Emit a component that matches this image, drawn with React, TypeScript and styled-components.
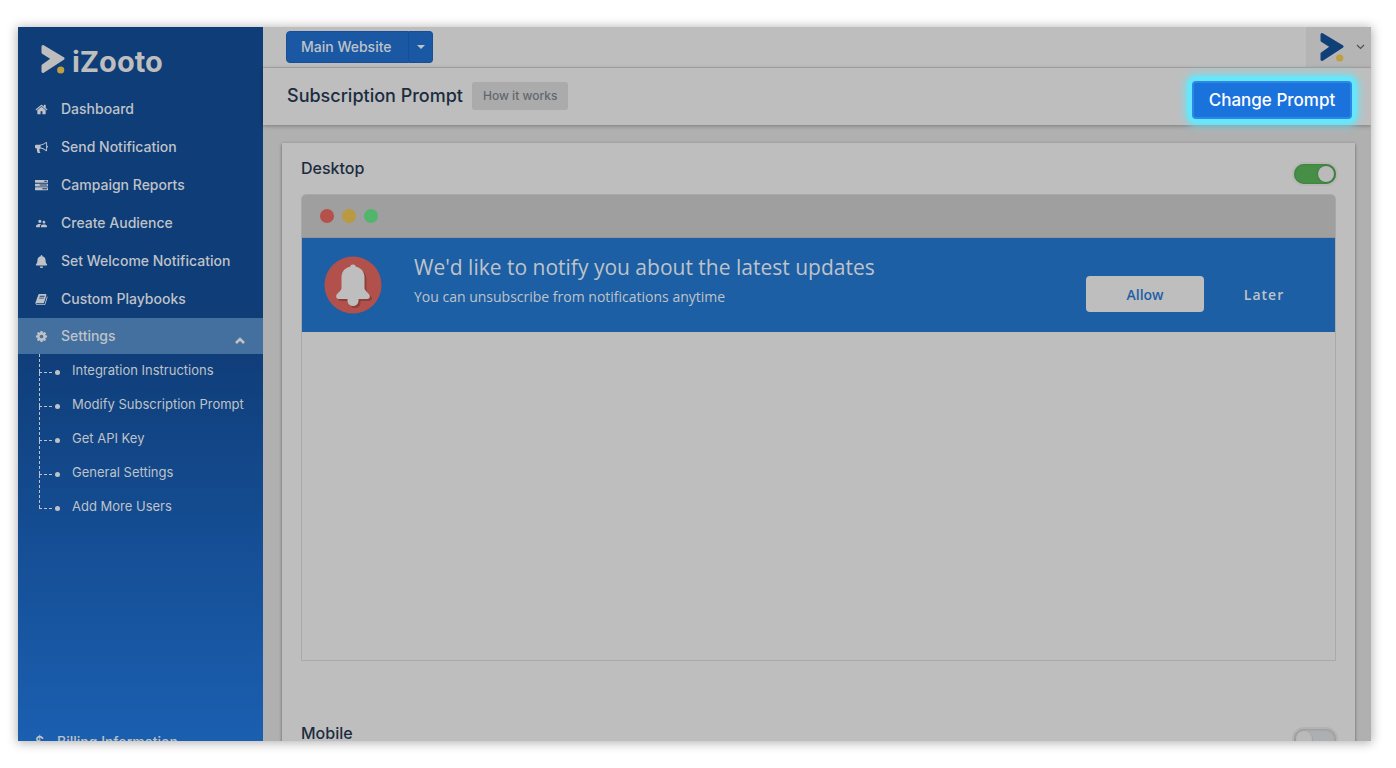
import React from 'react';
import styled, { createGlobalStyle, css } from 'styled-components';
import { FaBell } from 'react-icons/fa';
import { MdSupervisorAccount } from 'react-icons/md';

const color = {
  surface: '#bebebe',
  backdrop: '#b0b0b0',
  line: '#a9a9a9',
  ink: '#1c2c40',
  navy: '#0f3d78',
  blue: '#1a58a4',
  prompt: '#1c5fa5',
  light: '#bfc3c8',
};

const GlobalStyle = createGlobalStyle`
  *, *::before, *::after { box-sizing: border-box; }
  body { margin: 0; background: #fff; font-family: Inter, "Liberation Sans", sans-serif; }
  button { font-family: inherit; cursor: pointer; }
  ul { list-style: none; margin: 0; padding: 0; }
  h1, h2, h3, p { margin: 0; }
`;

const Page = styled.div`
  height: 100vh;
  padding: 27px 25px 27px 18px;
`;

const Frame = styled.div`
  display: flex;
  height: 100%;
  overflow: hidden;
  box-shadow: 0 1px 10px 1px rgba(0, 0, 0, 0.3);
`;

const Sidebar = styled.aside`
  display: flex;
  flex-direction: column;
  flex: 0 0 245px;
  overflow: hidden;
  background: linear-gradient(180deg, ${color.navy} 44%, #1b5fb1 100%);
`;

const Brand = styled.a`
  display: flex;
  align-items: center;
  gap: 7px;
  height: 63px;
  padding: 0 0 0 23px;
  color: ${color.surface};
  font-size: 29px;
  font-weight: 700;
  line-height: 32px;
  text-decoration: none;
`;

const BrandName = styled.span`
  padding-top: 6px;
`;

const NavLink = styled.a<{ $open?: boolean }>`
  display: flex;
  align-items: center;
  gap: 12px;
  height: ${(p) => (p.$open ? 36 : 38)}px;
  padding: 0 17px;
  color: ${color.light};
  background: ${(p) => (p.$open ? '#4470a0' : 'transparent')};
  font-size: 14px;
  font-weight: 500;
  line-height: 20px;
  text-decoration: none;
  white-space: nowrap;
`;

const IconSlot = styled.span`
  display: flex;
  flex: 0 0 14px;
`;

const Caret = styled.svg`
  margin: 8px 1px 0 auto;
`;

const SubItem = styled.li`
  position: relative;
  display: flex;
  align-items: center;
  height: 34px;
  padding: 0 0 2px 54px;

  &::before {
    content: '';
    position: absolute;
    left: 21px;
    top: -15px;
    width: 15px;
    height: 34px;
    background:
      repeating-linear-gradient(180deg, ${color.light} 0 3px, transparent 3px 5px) left top / 1px 100% no-repeat,
      repeating-linear-gradient(90deg, ${color.light} 0 3px, transparent 3px 5px) left bottom / 100% 1px no-repeat;
  }
  &:first-child::before {
    top: 0;
    height: 19px;
  }
  &::after {
    content: '';
    position: absolute;
    left: 37px;
    top: 16px;
    width: 5px;
    height: 5px;
    border-radius: 50%;
    background: ${color.light};
  }
`;

const SubLink = styled.a`
  color: ${color.light};
  font-size: 13px;
  line-height: 20px;
  text-decoration: none;
  white-space: nowrap;
`;

const SidebarFoot = styled.div`
  margin: auto 0 -20px;

  ${NavLink} {
    gap: 8px;
  }
`;

const Main = styled.main`
  display: flex;
  flex: 1;
  flex-direction: column;
  min-width: 0;
  background: ${color.backdrop};
`;

const TopBar = styled.header`
  display: flex;
  flex: 0 0 41px;
  align-items: center;
  justify-content: space-between;
  padding-left: 23px;
  background: ${color.surface};
  border-bottom: 1px solid ${color.line};
`;

const SplitButton = styled.div`
  display: flex;
  height: 32px;
`;

const siteButton = css`
  border: 1px solid #164f98;
  background: ${color.blue};
  color: ${color.light};
  font-size: 14px;
  font-weight: 500;
  line-height: 20px;
`;

const SiteButton = styled.button`
  ${siteButton}
  width: 123px;
  padding: 0 14px;
  border-radius: 4px 0 0 4px;
  text-align: left;
  white-space: nowrap;
`;

const SiteMenuButton = styled.button`
  ${siteButton}
  display: flex;
  align-items: center;
  justify-content: center;
  width: 24px;
  padding: 0;
  border-left: 0;
  border-radius: 0 4px 4px 0;
`;

const Account = styled.button`
  display: flex;
  align-items: center;
  gap: 12px;
  align-self: stretch;
  width: 65px;
  padding: 0 0 0 14px;
  border: 0;
  background: #b5b5b5;
`;

const PageHeader = styled.div`
  position: relative;
  display: flex;
  flex: 0 0 57px;
  align-items: center;
  gap: 9px;
  padding: 0 19px 2px 24px;
  background: ${color.surface};
  box-shadow: 0 1px 4px rgba(0, 0, 0, 0.3);
`;

const Title = styled.h1`
  color: ${color.ink};
  font-size: 18px;
  font-weight: 500;
  line-height: 24px;
  white-space: nowrap;
`;

const GhostButton = styled.button`
  height: 28px;
  padding: 0 11px;
  border: 0;
  border-radius: 3px;
  background: #ababab;
  color: #62676e;
  font-size: 12px;
  font-weight: 500;
  white-space: nowrap;
`;

const ChangeButton = styled.button`
  height: 38px;
  min-width: 160px;
  margin: 8px 0 0 auto;
  padding: 0 14px;
  border: 2px solid #2f86e4;
  border-radius: 4px;
  background: #1a72dd;
  box-shadow: 0 0 3px 4px #62e9ff, 0 0 8px 6px #62e9ff;
  color: #fff;
  font-size: 17px;
  font-weight: 500;
  line-height: 24px;
  white-space: nowrap;
`;

const Content = styled.div`
  flex: 1;
  min-height: 0;
  overflow: hidden;
  padding: 18px 16px 0 19px;
`;

const Card = styled.section`
  display: flex;
  flex-direction: column;
  gap: 60px;
  min-height: 100%;
  padding: 13px 19px 24px;
  background: ${color.surface};
  box-shadow: 0 1px 3px rgba(0, 0, 0, 0.45);
`;

const DeviceHead = styled.div`
  display: flex;
  align-items: flex-start;
  justify-content: space-between;
  height: 38px;
`;

const DeviceTitle = styled.h2`
  color: ${color.ink};
  font-size: 16px;
  font-weight: 500;
  line-height: 24px;
`;

const Switch = styled.input`
  appearance: none;
  width: 42px;
  height: 20px;
  margin: 8px 0 0;
  padding: 2px;
  border-radius: 10px;
  background: #aeafb1;
  box-shadow: 0 0 0 2px #b3b3b3, inset 0 0 3px #858585;

  &::before {
    content: '';
    display: block;
    width: 16px;
    height: 16px;
    border-radius: 50%;
    background: #bababa;
    box-shadow: 0 1px 2px #858585;
  }
  &:checked {
    background: #478f47;
    box-shadow: 0 0 0 2px #b6b6b6, inset 0 0 2px #2e6c33;
  }
  &:checked::before {
    margin-left: auto;
    box-shadow: 0 0 2px #2e5c33;
  }
`;

const Browser = styled.div`
  border: 1px solid ${color.line};
  border-radius: 5px 5px 0 0;
  overflow: hidden;
`;

const BrowserBar = styled.div`
  display: flex;
  align-items: center;
  gap: 8px;
  height: 43px;
  padding-left: 18px;
  background: #9f9f9f;
  border-bottom: 1px solid #949494;
`;

const Dot = styled.span<{ $fill: string }>`
  width: 14px;
  height: 14px;
  border-radius: 50%;
  background: ${(p) => p.$fill};
`;

const Prompt = styled.div`
  display: flex;
  align-items: center;
  height: 94px;
  padding: 0 31px 0 22px;
  background: ${color.prompt};
  font-family: "Open Sans", "Noto Sans", sans-serif;
`;

const PromptText = styled.div`
  flex: 1;
  padding: 0 0 8px 32px;
  color: ${color.light};
`;

const PromptTitle = styled.h3`
  font-size: 21px;
  font-weight: 400;
  line-height: 32px;
`;

const PromptNote = styled.p`
  font-size: 14px;
  line-height: 28px;
`;

const AllowButton = styled.button`
  width: 118px;
  height: 36px;
  margin-top: 18px;
  border: 0;
  border-radius: 4px;
  background: ${color.surface};
  color: #1d60a8;
  font-size: 14px;
  font-weight: 600;
`;

const LaterButton = styled.button`
  width: 80px;
  height: 36px;
  margin: 18px 0 0 20px;
  border: 0;
  background: transparent;
  color: ${color.light};
  font-size: 14px;
  font-weight: 600;
  letter-spacing: 1px;
`;

const BrowserBody = styled.div`
  height: 328px;
`;

const glyphs = {
  home: 'M1472 992v480q0 26-19 45t-45 19h-384v-384h-256v384h-384q-26 0-45-19t-19-45v-480q0-1 .5-3t.5-3l575-474 575 474q1 2 1 6zm223-69l-62 74q-8 9-21 11h-3q-13 0-21-7l-692-577-692 577q-12 8-24 7-13-2-21-11l-62-74q-8-10-7-23.5t11-21.5l719-599q32-26 76-26t76 26l244 204v-195q0-14 9-23t23-9h192q14 0 23 9t9 23v408l219 182q10 8 11 21.5t-7 23.5z',
  horn: 'M1664 640q53 0 90.5 37.5t37.5 90.5-37.5 90.5-90.5 37.5v384q0 52-38 90t-90 38q-417-347-812-380-58 19-91 66t-31 100.5 40 92.5q-20 33-23 65.5t6 58 33.5 55 48 50 61.5 50.5q-29 58-111.5 83t-168.5 11.5-132-55.5q-7-23-29.5-87.5t-32-94.5-23-89-15-101 3.5-98.5 22-110.5h-122q-66 0-113-47t-47-113v-192q0-66 47-113t113-47h480q435 0 896-384 52 0 90 38t38 90v384zm-128 604v-954q-394 302-768 343v270q377 42 768 341z',
  tasks: 'M1024 1408h640v-128h-640v128zm-384-512h1024v-128h-1024v128zm640-512h384v-128h-384v128zm512 832v256q0 26-19 45t-45 19h-1664q-26 0-45-19t-19-45v-256q0-26 19-45t45-19h1664q26 0 45 19t19 45zm0-512v256q0 26-19 45t-45 19h-1664q-26 0-45-19t-19-45v-256q0-26 19-45t45-19h1664q26 0 45 19t19 45zm0-512v256q0 26-19 45t-45 19h-1664q-26 0-45-19t-19-45v-256q0-26 19-45t45-19h1664q26 0 45 19t19 45z',
  book: 'M1703 478q40 57 18 129l-275 906q-19 64-76.5 107.5t-122.5 43.5h-923q-77 0-148.5-53.5t-99.5-131.5q-24-67-2-127 0-4 3-27t4-37q1-8-3-21.5t-3-19.5q2-11 8-21t16.5-23.5 16.5-23.5q23-38 45-91.5t30-91.5q3-10 .5-30t-.5-28q3-11 17-28t17-23q21-36 42-92t25-90q1-9-2.5-32t.5-28q4-13 22-30.5t22-22.5q19-26 42.5-84.5t27.5-96.5q1-8-3-25.5t-2-26.5q2-8 9-18t18-23 17-21q8-12 16.5-30.5t15-35 16-36 19.5-32 26.5-23.5 36-11.5 47.5 5.5l-1 3q38-9 51-9h761q74 0 114 56t18 130l-274 906q-36 119-71.5 153.5t-128.5 34.5h-869q-27 0-38 15-11 16-1 43 24 70 144 70h923q29 0 56-15.5t35-41.5l300-987q7-22 5-57 38 15 59 43zm-1064 2q-4 13 2 22.5t20 9.5h608q13 0 25.5-9.5t16.5-22.5l21-64q4-13-2-22.5t-20-9.5h-608q-13 0-25.5 9.5t-16.5 22.5zm-83 256q-4 13 2 22.5t20 9.5h608q13 0 25.5-9.5t16.5-22.5l21-64q4-13-2-22.5t-20-9.5h-608q-13 0-25.5 9.5t-16.5 22.5z',
  cog: 'M1152 896q0-106-75-181t-181-75-181 75-75 181 75 181 181 75 181-75 75-181zm512-109v222q0 12-8 23t-20 13l-185 28q-19 54-39 91 35 50 107 138 10 12 10 25t-9 23q-27 37-99 108t-94 71q-12 0-26-9l-138-108q-44 23-91 38-16 136-29 186-7 28-36 28h-222q-14 0-24.5-8.5t-11.5-21.5l-28-184q-49-16-90-37l-141 107q-10 9-25 9-14 0-25-11-126-114-165-168-7-10-7-23 0-12 8-23 15-21 51-66.5t54-70.5q-27-50-41-99l-183-27q-13-2-21-12.5t-8-23.5v-222q0-12 8-23t19-13l186-28q14-46 39-92-40-57-107-138-10-12-10-24 0-10 9-23 26-36 98.5-107.5t94.5-71.5q13 0 26 10l138 107q44-23 91-38 16-136 29-186 7-28 36-28h222q14 0 24.5 8.5t11.5 21.5l28 184q49 16 90 37l142-107q9-9 24-9 13 0 25 10 129 119 165 170 7 8 7 22 0 12-8 23-15 21-51 66.5t-54 70.5q26 50 41 98l183 28q13 2 21 12.5t8 23.5z',
};

const Glyph = ({ d, size = 13 }: { d: string; size?: number }) => (
  <svg width={size} height={size} viewBox="0 0 1792 1792" fill="currentColor" aria-hidden="true">
    <path d={d} />
  </svg>
);

const BrandMark = ({ fill }: { fill: string }) => (
  <svg width="24" height="30" viewBox="0 0 24 30" aria-hidden="true">
    <path
      d="M2 2.500L22 14.500L2 27.500V21.700L11.800 14.800L2 8.500Z"
      fill={fill}
      stroke={fill}
      strokeWidth="3"
      strokeLinejoin="round"
    />
    <circle cx="19.700" cy="26" r="3.600" fill="#bf9f3e" />
  </svg>
);

const BellBadge = () => (
  <svg width="58" height="58" viewBox="0 0 58 58" role="img" aria-label="Notification bell">
    <circle cx="29" cy="29" r="28.500" fill="#b2504b" />
    <path
      transform="translate(2 2)"
      fill="#8d3f3c"
      d="M29 8.500a3 3 0 0 1 3 2.200C37.500 12 40.500 16 40.500 21.500V32c0 3 4.500 5 5.200 7.500.5 2.200-.5 3.500-2.700 3.500h-8.500v1.500a5.500 5.500 0 0 1-11 0V43H15c-2.200 0-3.200-1.300-2.700-3.500C13 37 17.500 35 17.500 32V21.500C17.500 16 20.500 12 26 10.700a3 3 0 0 1 3-2.200z"
    />
    <path
      fill="#bebebe"
      d="M29 8.500a3 3 0 0 1 3 2.200C37.500 12 40.500 16 40.500 21.500V32c0 3 4.500 5 5.200 7.500.5 2.200-.5 3.500-2.700 3.500h-8.500v1.500a5.500 5.500 0 0 1-11 0V43H15c-2.200 0-3.200-1.300-2.700-3.500C13 37 17.500 35 17.500 32V21.500C17.500 16 20.500 12 26 10.700a3 3 0 0 1 3-2.200z"
    />
  </svg>
);

const navItems = [
  { label: 'Dashboard', icon: <Glyph d={glyphs.home} /> },
  { label: 'Send Notification', icon: <Glyph d={glyphs.horn} /> },
  { label: 'Campaign Reports', icon: <Glyph d={glyphs.tasks} /> },
  { label: 'Create Audience', icon: <MdSupervisorAccount size={13} /> },
  { label: 'Set Welcome Notification', icon: <FaBell size={13} /> },
  { label: 'Custom Playbooks', icon: <Glyph d={glyphs.book} /> },
];

const settingsItems = [
  'Integration Instructions',
  'Modify Subscription Prompt',
  'Get API Key',
  'General Settings',
  'Add More Users',
];

export default function App() {
  return (
    <Page>
      <GlobalStyle />
      <Frame>
        <Sidebar>
          <Brand href="#home">
            <BrandMark fill={color.surface} />
            <BrandName>iZooto</BrandName>
          </Brand>
          <nav>
            <ul>
              {navItems.map(({ label, icon }) => (
                <li key={label}>
                  <NavLink href="#nav">
                    <IconSlot>{icon}</IconSlot>
                    {label}
                  </NavLink>
                </li>
              ))}
              <li>
                <NavLink href="#settings" $open aria-expanded="true">
                  <IconSlot>
                    <Glyph d={glyphs.cog} />
                  </IconSlot>
                  Settings
                  <Caret width="10" height="7" viewBox="0 0 10 7" aria-hidden="true">
                    <path d="M1 6l4-4 4 4" fill="none" stroke="currentColor" strokeWidth="2.600" />
                  </Caret>
                </NavLink>
                <ul>
                  {settingsItems.map((label) => (
                    <SubItem key={label}>
                      <SubLink href="#settings">{label}</SubLink>
                    </SubItem>
                  ))}
                </ul>
              </li>
            </ul>
          </nav>
          <SidebarFoot>
            <NavLink href="#billing">
              <IconSlot>$</IconSlot>
              Billing Information
            </NavLink>
          </SidebarFoot>
        </Sidebar>
        <Main>
          <TopBar>
            <SplitButton>
              <SiteButton type="button">Main Website</SiteButton>
              <SiteMenuButton type="button" aria-label="Choose website">
                <svg width="8" height="4" viewBox="0 0 8 4" aria-hidden="true">
                  <path d="M0 0h8L4 4z" fill="currentColor" />
                </svg>
              </SiteMenuButton>
            </SplitButton>
            <Account type="button" aria-label="Account menu">
              <BrandMark fill="#114079" />
              <svg width="9" height="6" viewBox="0 0 9 6" aria-hidden="true">
                <path d="M1 1l3.500 3.500L8 1" fill="none" stroke="#4c5056" strokeWidth="1.200" />
              </svg>
            </Account>
          </TopBar>
          <PageHeader>
            <Title>Subscription Prompt</Title>
            <GhostButton type="button">How it works</GhostButton>
            <ChangeButton type="button">Change Prompt</ChangeButton>
          </PageHeader>
          <Content>
            <Card>
              <div>
                <DeviceHead>
                  <DeviceTitle id="desktop-title">Desktop</DeviceTitle>
                  <Switch type="checkbox" role="switch" defaultChecked aria-labelledby="desktop-title" />
                </DeviceHead>
                <Browser>
                  <BrowserBar>
                    <Dot $fill="#b5504b" />
                    <Dot $fill="#b99a40" />
                    <Dot $fill="#52b56c" />
                  </BrowserBar>
                  <Prompt>
                    <BellBadge />
                    <PromptText>
                      <PromptTitle>We'd like to notify you about the latest updates</PromptTitle>
                      <PromptNote>You can unsubscribe from notifications anytime</PromptNote>
                    </PromptText>
                    <AllowButton type="button">Allow</AllowButton>
                    <LaterButton type="button">Later</LaterButton>
                  </Prompt>
                  <BrowserBody />
                </Browser>
              </div>
              <DeviceHead>
                <DeviceTitle id="mobile-title">Mobile</DeviceTitle>
                <Switch type="checkbox" role="switch" aria-labelledby="mobile-title" />
              </DeviceHead>
            </Card>
          </Content>
        </Main>
      </Frame>
    </Page>
  );
}
